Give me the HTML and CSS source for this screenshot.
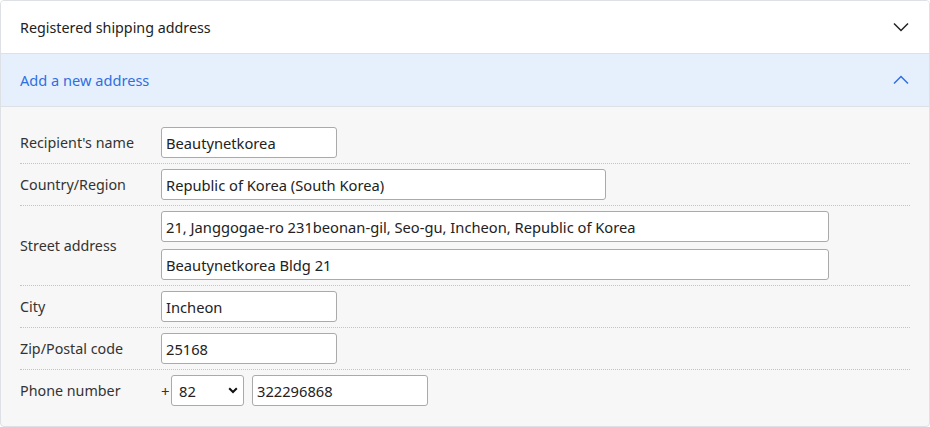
FILE: index.html
```html
<!DOCTYPE html>
<html lang="en">
<head>
<meta charset="utf-8">
<title>Address</title>
<link rel="stylesheet" href="styles.css">
</head>
<body>
<div class="panel">
  <div class="acc-head">
    <span>Registered shipping address</span>
    <svg class="chev" width="16" height="10" viewBox="0 0 16 10"><path d="M1 1.5 L8 8.5 L15 1.5" fill="none" stroke="#222" stroke-width="1.5"/></svg>
  </div>
  <div class="acc-head active">
    <span>Add a new address</span>
    <svg class="chev" width="16" height="10" viewBox="0 0 16 10"><path d="M1 8.5 L8 1.5 L15 8.5" fill="none" stroke="#2f6fe0" stroke-width="1.5"/></svg>
  </div>
  <div class="form">
    <div class="row">
      <div class="label">Recipient's name</div>
      <div class="fields"><input class="inp w-s" type="text" value="Beautynetkorea"></div>
    </div>
    <div class="row">
      <div class="label">Country/Region</div>
      <div class="fields"><input class="inp w-m" type="text" value="Republic of Korea (South Korea)"></div>
    </div>
    <div class="row">
      <div class="label">Street address</div>
      <div class="fields stack">
        <input class="inp w-l" type="text" value="21, Janggogae-ro 231beonan-gil, Seo-gu, Incheon, Republic of Korea">
        <input class="inp w-l" type="text" value="Beautynetkorea Bldg 21">
      </div>
    </div>
    <div class="row">
      <div class="label">City</div>
      <div class="fields"><input class="inp w-s" type="text" value="Incheon"></div>
    </div>
    <div class="row">
      <div class="label">Zip/Postal code</div>
      <div class="fields"><input class="inp w-s" type="text" value="25168"></div>
    </div>
    <div class="row last">
      <div class="label">Phone number</div>
      <div class="fields phone">
        <span class="plus">+</span>
        <div class="sel-wrap">
          <select class="sel"><option>82</option></select>
          <svg class="sel-arrow" width="10" height="7" viewBox="0 0 10 7"><path d="M1.2 1.3 L5 5 L8.8 1.3" fill="none" stroke="#111" stroke-width="2"/></svg>
        </div>
        <input class="inp w-s" type="text" value="322296868">
      </div>
    </div>
  </div>
</div>
</body>
</html>
```

FILE: styles.css
```css
* { box-sizing: border-box; }
html, body { margin: 0; padding: 0; background: #fff; }
body {
  font-family: "Noto Sans", "Liberation Sans", sans-serif;
  font-size: 14px;
  color: #333;
  width: 930px;
  height: 427px;
}
.panel {
  width: 930px;
  height: 427px;
  border: 1px solid #dde0e5;
  border-radius: 4px;
  overflow: hidden;
  background: #f7f7f7;
}
.acc-head {
  height: 53px;
  display: flex;
  align-items: center;
  justify-content: space-between;
  padding: 0 20px 0 19px;
  background: #fff;
  border-bottom: 1px solid #dde0e5;
  color: #222;
  font-size: 14.3px;
}
.acc-head.active {
  background: #e6f0fd;
  color: #2f6fe0;
  font-size: 14.6px;
}
.chev { display: block; }
.form {
  padding: 15px 19px 13px 19px;
}
.row {
  display: flex;
  align-items: center;
  padding: 5px 0;
  border-bottom: 1px dotted #c4c4c4;
}
.row.last { border-bottom: none; }
.label {
  width: 141px;
  flex: none;
  color: #333;
  font-size: 14.3px;
}
.fields { display: flex; }
.fields.stack { flex-direction: column; gap: 7px; }
.inp {
  height: 31px;
  border: 1px solid #aaa;
  border-radius: 3px;
  background: #fff;
  padding: 0 4px;
  font-family: inherit;
  font-size: 14.7px;
  color: #222;
  outline: none;
}
.w-s { width: 176px; }
.w-m { width: 445px; }
.w-l { width: 668px; }
.phone { align-items: center; }
.plus { color: #333; width: 10px; font-size: 15px; }
.sel-wrap { position: relative; margin-right: 8px; }
.sel {
  appearance: none;
  -webkit-appearance: none;
  display: block;
  width: 73px;
  height: 31px;
  border: 1px solid #aaa;
  border-radius: 3px;
  background: #fff;
  padding: 0 7px;
  font-family: inherit;
  font-size: 14.7px;
  color: #222;
}
.sel-arrow {
  position: absolute;
  right: 6px;
  top: 12px;
}
```
